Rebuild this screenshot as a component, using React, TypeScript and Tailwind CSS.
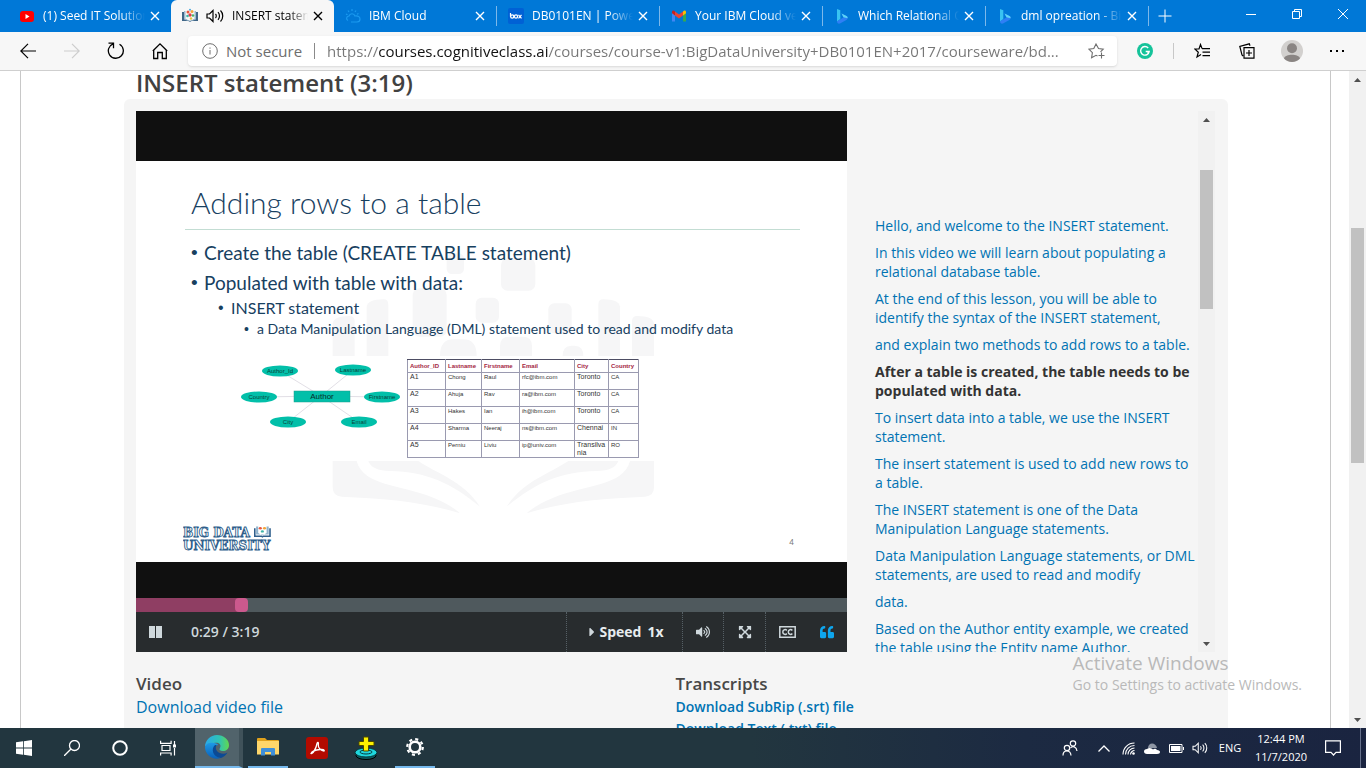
import type { ReactNode } from 'react';
import { FaCaretRight, FaQuoteLeft, FaVolumeUp, FaExpandArrowsAlt } from 'react-icons/fa';

type IconProps = { className?: string };

const line = { fill: 'none', stroke: 'currentColor' } as const;

function CloseIcon({ className = 'size-4' }: IconProps) {
  return (
    <svg viewBox="0 0 16 16" className={className} {...line} strokeWidth="1.4">
      <path d="M4 4l8 8M12 4l-8 8" />
    </svg>
  );
}

function YoutubeIcon() {
  return (
    <svg viewBox="0 0 16 16" className="size-4 shrink-0">
      <rect x="1" y="3" width="14" height="11" rx="3" fill="#f00" />
      <path d="M6.5 6l4 2.5-4 2.5z" fill="#fff" />
    </svg>
  );
}

function BookIcon({ className = 'size-4 shrink-0' }: IconProps) {
  return (
    <svg viewBox="0 0 16 16" className={className}>
      <path d="M0 4h3v7l5 2 5-2V4h3v9H9.500l-1.500 1-1.500-1H0z" fill="#3f6687" />
      <path d="M2 3h1.500v8L8 13l4.500-2V3H14v8.500l-6 2-6-2z" fill="#9db9cf" />
      <circle cx="6" cy="4" r="1.500" fill="#e8573f" />
      <circle cx="10" cy="3.500" r="1.500" fill="#f3a53a" />
      <circle cx="8" cy="7" r="1.700" fill="#e23b4c" />
      <circle cx="5.500" cy="8" r="1.300" fill="#3fb6a8" />
      <circle cx="11" cy="7.500" r="1.300" fill="#46b36b" />
      <circle cx="8" cy="1.800" r="1" fill="#49a9dd" />
      <circle cx="9" cy="10.500" r="1.200" fill="#e7c23d" />
    </svg>
  );
}

function CloudIcon() {
  return (
    <svg viewBox="0 0 16 16" className="size-4 shrink-0" fill="none" stroke="#1b9af0" strokeWidth="1.2">
      <path d="M3 12.500c-2-1-2-4 1-4.500 1-3 5-3 6 0 3-.5 5 1 5 3s-1.500 3-3 3H6" />
      <path d="M1 6l1.500.8M3 2.500l1 1.500M7 1v2M11 2.500l-1 1.500M13.500 5.500l-1.500.7" />
    </svg>
  );
}

function BoxIcon() {
  return (
    <svg viewBox="0 0 16 16" className="size-4 shrink-0">
      <rect width="16" height="16" rx="2" fill="#0061d5" />
      <g fill="none" stroke="#fff" strokeWidth="1.200">
        <path d="M2.500 5v3.600" />
        <circle cx="4.200" cy="8.500" r="1.600" />
        <circle cx="8" cy="8.500" r="1.600" />
        <path d="M10.500 6.800l3 3.500M13.500 6.800l-3 3.500" />
      </g>
    </svg>
  );
}

function GmailIcon() {
  return (
    <svg viewBox="0 0 16 16" className="size-4 shrink-0">
      <path d="M1 4v9.500h3V7z" fill="#4285f4" />
      <path d="M15 4v9.500h-3V7z" fill="#34a853" />
      <path d="M12 3.500V7.500l3-2.200V4c0-1.600-1.800-2.200-3-.5z" fill="#fbbc04" />
      <path d="M4 3.500l4 3 4-3v4l-4 3-4-3z" fill="#ea4335" />
      <path d="M4 3.500v4L1 5.300V4c0-1.600 1.800-2.200 3-.5z" fill="#c5221f" />
    </svg>
  );
}

function BingIcon() {
  return (
    <svg viewBox="0 0 16 16" className="size-4 shrink-0">
      <path d="M3 1l3.300 1.300V11L3 13.500z" fill="#39c3f2" />
      <path d="M7.500 5.500l5 2.500c1.800 1 1.500 3-.2 4L6 15.500c-2 .6-3-1-3-2.300L9.500 9.500z" fill="#2f7ff5" />
      <path d="M7.500 5.500l5 2.500c1 .6 1.200 1.400 1 2.200L9.500 9.300z" fill="#5cd5f5" />
    </svg>
  );
}

function SpeakerOutline({ className = 'size-4' }: IconProps) {
  return (
    <svg viewBox="0 0 18 16" className={className} {...line} strokeWidth="1.200">
      <path d="M1 6h2.500L7 2.500v11L3.500 10H1z" />
      <path d="M9.500 6c1 1 1 3 0 4M12 4.200c2 2 2 5.600 0 7.600M14.500 2.500c3 3 3 8 0 11" />
    </svg>
  );
}

const tabs: { title: string; icon: ReactNode; active?: boolean }[] = [
  { title: '(1) Seed IT Solutions', icon: <YoutubeIcon /> },
  { title: 'INSERT statement', icon: <BookIcon />, active: true },
  { title: 'IBM Cloud', icon: <CloudIcon /> },
  { title: 'DB0101EN | PowerPoint', icon: <BoxIcon /> },
  { title: 'Your IBM Cloud verify', icon: <GmailIcon /> },
  { title: 'Which Relational Query', icon: <BingIcon /> },
  { title: 'dml opreation - Bing', icon: <BingIcon /> },
];

function TabStrip() {
  return (
    <header className="flex h-8 shrink-0 bg-[#0078d7] pl-2 text-white">
      <div role="tablist" aria-label="Tabs" className="flex min-w-0">
        {tabs.map((tab, i) => (
          <div
            key={tab.title}
            className={
              'flex w-[163px] min-w-0 items-center pr-2 pl-[11px] ' +
              (tab.active ? 'rounded-t-md bg-[#f7f7f7] text-black' : '')
            }
          >
            <button role="tab" aria-selected={!!tab.active} className="flex min-w-0 flex-1 items-center gap-2">
              {tab.icon}
              {tab.active && <SpeakerOutline className="h-4 w-[18px] shrink-0" />}
              <span className="min-w-0 flex-1 overflow-hidden text-left text-xs whitespace-nowrap [mask-image:linear-gradient(90deg,#000_75%,transparent)]">
                {tab.title}
              </span>
            </button>
            <button aria-label={'Close ' + tab.title} className="ml-0.5">
              <CloseIcon />
            </button>
            {i > 1 && <span className="-mr-2 ml-2 h-5 w-px shrink-0 bg-[#7db8ea]" />}
          </div>
        ))}
      </div>
      <button aria-label="New tab" className="flex w-8 items-center justify-center">
        <svg viewBox="0 0 14 14" className="size-3.5" {...line}>
          <path d="M7 .5v13M.5 7h13" />
        </svg>
      </button>
      <div className="ml-auto flex h-7">
        <button aria-label="Minimize" className="flex w-[46px] items-center justify-center">
          <svg viewBox="0 0 10 10" className="size-2.5" {...line}>
            <path d="M0 5.500h10" />
          </svg>
        </button>
        <button aria-label="Restore" className="flex w-[46px] items-center justify-center">
          <svg viewBox="0 0 10 10" className="size-2.5" {...line}>
            <path d="M.5 2.500h7v7h-7zM2.500 2.500v-2h7v7h-2" />
          </svg>
        </button>
        <button aria-label="Close window" className="flex w-[46px] items-center justify-center">
          <svg viewBox="0 0 10 10" className="size-2.5" {...line}>
            <path d="M0 0l10 10M10 0L0 10" />
          </svg>
        </button>
      </div>
    </header>
  );
}

function ToolButton({ label, children, className = '' }: { label: string; children: ReactNode; className?: string }) {
  return (
    <button aria-label={label} className={'flex h-8 w-11 shrink-0 items-center justify-center ' + className}>
      {children}
    </button>
  );
}

function Toolbar() {
  return (
    <nav className="flex h-[39px] shrink-0 items-center border-b border-[#cfcfcf] bg-[#f7f7f7] pr-[7px] pl-1.5 text-black">
      <ToolButton label="Back">
        <svg viewBox="0 0 16 16" className="size-4" {...line} strokeWidth="1.200">
          <path d="M16 8H.8M8 .8L.8 8 8 15.200" />
        </svg>
      </ToolButton>
      <ToolButton label="Forward" className="text-[#cdcdcd]">
        <svg viewBox="0 0 16 16" className="size-4" {...line} strokeWidth="1.200">
          <path d="M0 8h15.200M8 .8L15.200 8 8 15.200" />
        </svg>
      </ToolButton>
      <ToolButton label="Refresh">
        <svg viewBox="0 0 18 18" className="size-[18px]" {...line} strokeWidth="1.300">
          <path d="M6 1.800A7.500 7.500 0 1 0 12.500 2.200M1.500 1.200h5v5" />
        </svg>
      </ToolButton>
      <ToolButton label="Home">
        <svg viewBox="0 0 16 18" className="h-[18px] w-4" {...line} strokeWidth="1.300">
          <path d="M1.700 16.500V8L8 1.800 14.300 8v8.500h-4V10.500H5.700v6zM.8 9L8 1.800 15.200 9" />
        </svg>
      </ToolButton>
      <div className="ml-1.5 flex h-[30px] min-w-0 flex-1 items-center rounded-sm bg-white pr-3 pl-3.5 text-[15px] text-[#6e6e6e] shadow-sm">
        <svg viewBox="0 0 16 16" className="size-4 shrink-0" {...line}>
          <circle cx="8" cy="8" r="7.300" />
          <path d="M8 7v4.500M8 4.500v1.200" />
        </svg>
        <label htmlFor="address" className="ml-2 shrink-0">
          Not secure
        </label>
        <span className="mx-3 h-4 w-px shrink-0 bg-[#8a8a8a]" />
        <input
          id="address"
          readOnly
          className="min-w-0 flex-1 bg-[linear-gradient(90deg,#767676_52px,#111111_52px,#111111_221px,#767676_221px)] bg-clip-text text-[15px] text-transparent outline-none"
          value="https://courses.cognitiveclass.ai/courses/course-v1:BigDataUniversity+DB0101EN+2017/courseware/bd..."
        />
        <button aria-label="Add to favorites" className="ml-2 shrink-0">
          <svg viewBox="0 0 17 16" className="h-4 w-[17px]" {...line} strokeWidth="1.100">
            <path d="M12.500 8.800l2.700-2.600-4.700-.7L8 1 5.800 5.500l-4.900.7 3.500 3.500-.8 5L8 12.300l1.500.8M13.500 9.500v6M10.500 12.500h6" />
          </svg>
        </button>
      </div>
      <ToolButton label="Grammarly" className="ml-1.5">
        <svg viewBox="0 0 16 16" className="size-4">
          <circle cx="8" cy="8" r="8" fill="#15c39a" />
          <path d="M11.200 5A4.300 4.300 0 1 0 12.200 8.500H8.700M12.200 8.500l-1.500 2" fill="none" stroke="#fff" strokeWidth="1.400" />
        </svg>
      </ToolButton>
      <span className="mx-1.5 h-4 w-px shrink-0 bg-[#c8c8c8]" />
      <div className="flex gap-px">
        <ToolButton label="Favorites">
          <svg viewBox="0 0 16 16" className="size-4" {...line} strokeWidth="1.200">
            <path d="M8 5.500L6.500 1.500 5 6H.8l3.500 3.200L3 14l4-2.500M8 5.700h8M8.500 9.200H16M8.500 12.700H16" />
          </svg>
        </ToolButton>
        <ToolButton label="Collections">
          <svg viewBox="0 0 16 16" className="size-4" {...line} strokeWidth="1.200">
            <path d="M5 4.700h10v10.500H5zM10 7v6M7 10h6M4 13L3 12 .8 3.500l9.500-2.700.7 2" />
          </svg>
        </ToolButton>
        <ToolButton label="Profile">
          <svg viewBox="0 0 22 22" className="size-[22px]">
            <circle cx="11" cy="11" r="11" fill="#d2d0ce" />
            <circle cx="11" cy="8.300" r="5" fill="#8a8583" />
            <path d="M3 18.500c1-5 15-5 16 0a11 11 0 0 1-16 0z" fill="#8a8583" />
          </svg>
        </ToolButton>
        <ToolButton label="Settings and more">
          <svg viewBox="0 0 16 4" className="h-1 w-4" fill="currentColor">
            <rect x="1" y="1" width="2" height="2" />
            <rect x="7" y="1" width="2" height="2" />
            <rect x="13" y="1" width="2" height="2" />
          </svg>
        </ToolButton>
      </div>
    </nav>
  );
}

function Arrow({ up }: { up?: boolean }) {
  return (
    <svg viewBox="0 0 17 17" className="size-[17px] shrink-0">
      <path d={up ? 'M5 11l3.500-4L12 11z' : 'M5 7l3.500 4L12 7z'} fill="#505050" />
    </svg>
  );
}

function ScrollBar({ thumb }: { thumb: string }) {
  return (
    <div aria-hidden="true" className="flex w-[17px] shrink-0 flex-col bg-[#f1f1f1]">
      <Arrow up />
      <div className="min-h-0 flex-1">
        <div className={'mx-0.5 bg-[#c1c1c1] ' + thumb} />
      </div>
      <Arrow />
    </div>
  );
}

function Watermark() {
  const half = (
    <>
      <path d="M98 348V250q5-22 50-22 16 0 16 16v104z" />
      <path d="M200 348V200q5-22 50-22 15 0 15 16v154z" />
      <path d="M98 663h72c20 75 130 70 230 110q50 20 80 47c-110-35-230-45-355-50q-27-2-27-28z" />
      <path d="M205 663h150c60 40 135 60 185 137-85-70-160-105-270-107q-55-1-65-30z" />
    </>
  );
  return (
    <svg viewBox="0 0 1260 870" aria-hidden="true" className="absolute top-[79px] left-[164px] w-[420px]" fill="#f6f6f7">
      {half}
      <g transform="translate(1160 0) scale(-1 1)">{half}</g>
      <rect x="338" y="145" width="102" height="145" rx="20" />
      <rect x="440" y="40" width="52" height="62" rx="16" />
      <rect x="603" y="55" width="103" height="97" rx="20" />
      <rect x="527" y="173" width="70" height="75" rx="18" />
      <rect x="745" y="190" width="70" height="90" rx="18" />
      <path d="M420 348q0-50 40-50h30q40 0 40 50zM600 348v-30q0-28 28-28h40q28 0 28 28v30zM788 348q0-31 26-31h10q26 0 26 31z" />
    </svg>
  );
}

const entities = [
  { name: 'Author_Id', x: 39, y: 12 },
  { name: 'Lastname', x: 112, y: 11 },
  { name: 'Country', x: 18, y: 38 },
  { name: 'Firstname', x: 141, y: 38 },
  { name: 'City', x: 47, y: 63 },
  { name: 'Email', x: 118, y: 63 },
];

function EntityDiagram() {
  return (
    <svg viewBox="0 0 160 72" className="h-[72px] w-40 shrink-0 font-['Liberation_Sans']" textAnchor="middle">
      {entities.map((e) => (
        <g key={e.name}>
          <line x1="80" y1="37" x2={e.x} y2={e.y} stroke="#e2dfe6" />
          <ellipse cx={e.x} cy={e.y} rx="18" ry="5.500" fill="#02bfa9" />
          <text x={e.x} y={e.y + 2} fontSize="6" fill="#0a3f3a">
            {e.name}
          </text>
        </g>
      ))}
      <rect x="53" y="32" width="56" height="11" fill="#02bfa9" stroke="#1c9c8c" strokeWidth=".5" />
      <text x="81" y="40" fontSize="8" fill="#062b28">
        Author
      </text>
    </svg>
  );
}

const columns = [
  { name: 'Author_ID', width: 'w-[38px]', size: 'text-[7px]' },
  { name: 'Lastname', width: 'w-9', size: 'text-[6px]' },
  { name: 'Firstname', width: 'w-[38px]', size: 'text-[6px]' },
  { name: 'Email', width: 'w-[55px]', size: 'text-[6px]' },
  { name: 'City', width: 'w-[34px]', size: 'text-[7px]' },
  { name: 'Country', width: 'w-[30px]', size: 'text-[6px]' },
];

const authors = [
  ['A1', 'Chong', 'Raul', 'rfc@ibm.com', 'Toronto', 'CA'],
  ['A2', 'Ahuja', 'Rav', 'ra@ibm.com', 'Toronto', 'CA'],
  ['A3', 'Hakes', 'Ian', 'ih@ibm.com', 'Toronto', 'CA'],
  ['A4', 'Sharma', 'Neeraj', 'ns@ibm.com', 'Chennai', 'IN'],
  ['A5', 'Perniu', 'Liviu', 'ip@univ.com', 'Transilvania', 'RO'],
];

function AuthorTable() {
  return (
    <table className="w-[231px] table-fixed border-collapse border border-[#4d4d63] bg-white font-['Liberation_Sans'] text-[6px] leading-[8px] text-[#333]">
      <thead>
        <tr className="h-[13px]">
          {columns.map((c) => (
            <th key={c.name} className={'border border-[#9a9ab0] border-t-[#4d4d63] px-0.5 text-left font-bold text-[#a3253f] ' + c.width}>
              {c.name}
            </th>
          ))}
        </tr>
      </thead>
      <tbody>
        {authors.map((row) => (
          <tr key={row[0]} className="h-[17px] align-top">
            {row.map((cell, i) => (
              <td key={i} className={'border border-[#9a9ab0] px-0.5 break-all ' + columns[i].size}>
                {cell}
              </td>
            ))}
          </tr>
        ))}
      </tbody>
    </table>
  );
}

const bullets = [
  { text: 'Create the table (CREATE TABLE statement)', style: 'text-[19px] leading-[30px]' },
  { text: 'Populated with table with data:', style: 'text-[19px] leading-[30px]' },
  { text: 'INSERT statement', style: 'pl-[27px] text-base leading-5' },
  {
    text: 'a Data Manipulation Language (DML) statement used to read and modify data',
    style: 'pl-[53px] text-sm leading-[22px]',
  },
];

function Slide() {
  return (
    <div className="relative h-[401px] bg-white px-[47px] pt-5 font-['Lato'] text-[#17405f] [font-variant-ligatures:none]">
      <Watermark />
      <div className="relative">
        <h3 className="ml-0.5 border-b border-[#c3ddd3] pb-1.5 pl-1.5 text-[30px] leading-[42px] font-light">
          Adding rows to a table
        </h3>
        <ul className="pt-2 pl-2">
          {bullets.map((b) => (
            <li key={b.text} className={'flex ' + b.style}>
              <span className="w-[13px] shrink-0 font-['Liberation_Sans']">•</span>
              {b.text}
            </li>
          ))}
        </ul>
        <div className="mt-[19px] ml-[58px] flex gap-1.5">
          <EntityDiagram />
          <AuthorTable />
        </div>
      </div>
      <div className="absolute inset-x-[47px] bottom-2.5 flex items-end justify-between">
        <svg viewBox="0 0 90 27" className="h-[27px] w-[90px] font-['DejaVu_Serif'] font-bold" fill="#fff" stroke="#2f5f8c" strokeWidth=".9">
          <text x="0" y="12" fontSize="12">
            BIG DATA
          </text>
          <text x="0" y="25" fontSize="12">
            UNIVERSITY
          </text>
          <g transform="translate(71 0) scale(1.050 .8)" stroke="none">
            <path d="M0 4h1.500v9h6L8 14l.5-1h6V4H16v11H9l-1 1-1-1H0z" fill="#2f5f8c" />
            <path d="M2 2h2v8l4 3 4-3V2h2v10H2z" fill="#8eb2cc" />
            <circle cx="6" cy="4" r="1.500" fill="#e8573f" />
            <circle cx="10" cy="4" r="1.500" fill="#f3a53a" />
            <circle cx="8" cy="8" r="1.500" fill="#3fb6a8" />
          </g>
        </svg>
        <span className="mr-1.5 mb-1 text-[8px] leading-3 text-[#777]">4</span>
      </div>
    </div>
  );
}

function Player() {
  const control = 'flex h-10 items-center justify-center border-l border-dotted border-[#566066]';
  return (
    <section aria-label="Video" className="min-w-0 flex-1 bg-[#101010]">
      <div className="pt-[50px] pb-9">
        <Slide />
      </div>
      <div role="progressbar" aria-label="Position" aria-valuenow={29} aria-valuemax={199} className="flex h-3.5 bg-[#4f595d]">
        <div className="w-[15%] bg-[#8f3e63]" />
        <div className="-ml-2 w-[13px] rounded-sm bg-[#cb598d]" />
      </div>
      <div className="flex h-10 items-center bg-[#282c2e] text-[#cfd8dc]">
        <button aria-label="Pause" className="ml-[13px] flex gap-px">
          <span className="h-3 w-1.5 bg-current" />
          <span className="h-3 w-1.5 bg-current" />
        </button>
        <span className="ml-[29px] text-sm leading-none font-semibold">0:29 / 3:19</span>
        <button className={control + ' ml-auto w-[116px] text-sm font-bold text-[#e7ecee]'}>
          <FaCaretRight className="size-3.5 text-[#cfd8dc]" />
          Speed<span className="ml-1.5">1x</span>
        </button>
        <button aria-label="Volume" className={control + ' w-[41px]'}>
          <FaVolumeUp className="size-3.5" />
        </button>
        <button aria-label="Fill browser" className={control + ' w-[42px]'}>
          <FaExpandArrowsAlt className="size-3.5" />
        </button>
        <button aria-label="Closed captions" className={control + ' w-11'}>
          <svg viewBox="0 0 17 12" className="h-3 w-[17px]" {...line} strokeWidth="1.500">
            <path d="M.8.8h15.400v10.400H.8zM7.800 4.500c-1-1.500-4-1.200-4 1.500s3 3 4 1.500M13.300 4.500c-1-1.500-4-1.200-4 1.500s3 3 4 1.500" />
          </svg>
        </button>
        <button aria-label="Transcript" className="flex h-10 w-[38px] items-center pl-[11px] text-[#0ea6ee]">
          <FaQuoteLeft className="size-3.5" />
        </button>
      </div>
    </section>
  );
}

const transcript = [
  'Hello, and welcome to the INSERT statement.',
  'In this video we will learn about populating a relational database table.',
  'At the end of this lesson, you will be able to identify the syntax of the INSERT statement,',
  'and explain two methods to add rows to a table.',
  'After a table is created, the table needs to be populated with data.',
  'To insert data into a table, we use the INSERT statement.',
  'The insert statement is used to add new rows to a table.',
  'The INSERT statement is one of the Data Manipulation Language statements.',
  'Data Manipulation Language statements, or DML statements, are used to read and modify',
  'data.',
  'Based on the Author entity example, we created the table using the Entity name Author.',
];

function Transcript() {
  return (
    <aside className="flex h-[541px] w-[368px] shrink-0 overflow-hidden pl-7">
      <ol className="flex min-w-0 flex-1 flex-col gap-2 pt-[105px] text-sm leading-[19px] text-[#0073b3]">
        {transcript.map((text, i) => (
          <li key={i} className={i === 4 ? 'font-bold text-[#333]' : ''}>
            {text}
          </li>
        ))}
      </ol>
      <ScrollBar thumb="mt-[42px] h-[139px]" />
    </aside>
  );
}

function CoursePage() {
  return (
    <div className="flex min-h-0 flex-1 overflow-hidden bg-white">
      <main className="mr-[18px] ml-5 min-w-0 flex-1 border-x border-[#c8c8c8] pr-[102px] pl-[103px]">
        <h1 className="-mt-1 ml-3 text-2xl leading-8 font-semibold text-[#414141]">INSERT statement (3:19)</h1>
        <article className="rounded-md bg-[#f5f5f5] py-3 pr-[13px] pl-3">
          <div className="flex">
            <Player />
            <Transcript />
          </div>
          <div className="mt-[21px] grid grid-cols-2 text-[#0073b3]">
            <section>
              <h2 className="text-[17px] leading-[22px] font-semibold text-[#474747]">Video</h2>
              <a href="#video" className="leading-[22px]">
                Download video file
              </a>
            </section>
            <section className="flex flex-col items-start">
              <h2 className="text-[17px] leading-[22px] font-semibold text-[#474747]">Transcripts</h2>
              <a href="#srt" className="text-sm leading-6 font-semibold">
                Download SubRip (.srt) file
              </a>
              <a href="#txt" className="text-sm leading-5 font-semibold">
                Download Text (.txt) file
              </a>
            </section>
          </div>
        </article>
      </main>
      <ScrollBar thumb="mt-[140px] h-[235px]" />
    </div>
  );
}

function TaskButton({ label, children, className = 'w-12' }: { label: string; children: ReactNode; className?: string }) {
  return (
    <button aria-label={label} className={'flex h-10 items-center justify-center ' + className}>
      {children}
    </button>
  );
}

function Taskbar() {
  return (
    <footer className="flex h-10 shrink-0 items-center bg-[linear-gradient(90deg,#22363f_0%,#22363f_55%,#1c2a42_75%,#1a2440_100%)] text-white">
      <TaskButton label="Start">
        <svg viewBox="0 0 16 16" className="size-4" fill="currentColor">
          <path d="M0 2.300L7 1.300v6.300H0zM7.800 1.200L16 0v7.600H7.800zM0 8.400h7v6.300l-7-1zM7.800 8.400H16V16l-8.200-1.200z" />
        </svg>
      </TaskButton>
      <TaskButton label="Search">
        <svg viewBox="0 0 16 16" className="size-4" {...line} strokeWidth="1.300">
          <circle cx="10.500" cy="5.500" r="5" />
          <path d="M7 9L0 16" />
        </svg>
      </TaskButton>
      <TaskButton label="Cortana">
        <svg viewBox="0 0 16 16" className="size-4" {...line} strokeWidth="2">
          <circle cx="8" cy="8" r="6.800" />
        </svg>
      </TaskButton>
      <TaskButton label="Task view">
        <svg viewBox="0 0 16 16" className="size-4" {...line} strokeWidth="1.200">
          <path d="M.6.800v2.500h10.500V.8M2 5.500h8v5H2zM.6 15.500V13h10.500v2.500M14.500 1v4M14.500 8v7.500" />
          <path d="M13 4.500h3v3h-3z" fill="currentColor" stroke="none" />
        </svg>
      </TaskButton>
      <TaskButton label="Microsoft Edge" className="ml-[3px] w-12 border-r-4 border-b-2 border-r-[#40525a] border-b-[#76b9ed] bg-[#51636b]">
        <svg viewBox="0 0 24 24" className="size-6">
          <defs>
            <linearGradient id="edgeTop" x1="0" x2="1">
              <stop offset="0" stopColor="#2aa9ea" />
              <stop offset=".6" stopColor="#2fc3b4" />
              <stop offset="1" stopColor="#62d84e" />
            </linearGradient>
            <linearGradient id="edgeSide" x1="0" x2="0" y1="0" y2="1">
              <stop offset="0" stopColor="#1e9be6" />
              <stop offset="1" stopColor="#0a5fb8" />
            </linearGradient>
          </defs>
          <path d="M0 12C0 5 5.500 0 12 0s12 4.500 12 10c0 4-3 6-6 6-2.500 0-4.500-1-3-3 2-4-2-6-6-5-5 0-8 2-9 4z" fill="url(#edgeTop)" />
          <path d="M0 12c1-4 5-5 9-4 2 0 4 1 4 2-6 1-5 11 3 13-8 3-16-3-16-11z" fill="url(#edgeSide)" />
          <path d="M10 10c-4 3-3 12 6 13 3-1 5-3 6.500-5.500-3 2-8 1.500-10.500-1.500-1.500-2-1.500-4-.5-6z" fill="#0c4a94" />
        </svg>
      </TaskButton>
      <TaskButton label="File Explorer" className="ml-[5px] w-10 border-b-2 border-[#76b9ed]">
        <svg viewBox="0 0 22 18" className="h-[18px] w-[22px]">
          <path d="M0 1q0-1 1-1h7l2 2h11q1 0 1 1v5H0z" fill="#e0a21c" />
          <path d="M0 3h22v13.500H0z" fill="#fed66a" />
          <path d="M4 17.500V11q0-1 1-1h12q1 0 1 1v6.500h-4V14H8v3.500z" fill="#3f8fd8" />
        </svg>
      </TaskButton>
      <TaskButton label="Acrobat Reader" className="ml-1 w-[49px]">
        <svg viewBox="0 0 22 22" className="size-[22px]">
          <rect width="22" height="22" rx="3" fill="#b30b00" />
          <path d="M5 16.500c1.500 1 5-5 5.800-9 .4-3 2-2.500 1.500 0-.5 3.500 3 6.500 5.700 6.500 1-1-1.500-2-4-1.500-3 .3-8 1.700-9 4z" fill="none" stroke="#fff" strokeWidth="1.300" />
        </svg>
      </TaskButton>
      <TaskButton label="Download manager" className="w-[49px]">
        <svg viewBox="0 0 24 24" className="size-6">
          <ellipse cx="12" cy="19.500" rx="10" ry="4" fill="#0b5a5f" stroke="#000" />
          <ellipse cx="12" cy="16.500" rx="11" ry="4.500" fill="#1fd7dd" stroke="#06383c" />
          <ellipse cx="12" cy="16" rx="6" ry="2" fill="none" stroke="#06383c" />
          <path d="M9.500 1h5v4.500H20v4h-5.500V15h-5V9.500H5v-4h4.500z" fill="#fff200" stroke="#4c4a00" />
        </svg>
      </TaskButton>
      <TaskButton label="Settings" className="ml-[5px] w-10 border-b-2 border-[#76b9ed]">
        <svg viewBox="0 0 18 18" className="size-[18px]" {...line}>
          <circle cx="9" cy="9" r="5.300" strokeWidth="2.600" />
          <circle cx="9" cy="9" r="7.800" strokeWidth="2.200" strokeDasharray="3.060 3.060" />
        </svg>
      </TaskButton>

      <div className="ml-auto flex items-center">
        <TaskButton label="People" className="mr-1 w-9">
          <svg viewBox="0 0 16 16" className="size-4" {...line} strokeWidth="1.200">
            <circle cx="5" cy="8" r="2.700" />
            <circle cx="11" cy="3.500" r="2.700" />
            <path d="M1 15.500c0-6 7.500-6 8 0M8.500 8c2-2.500 6-1.500 6.500 3" />
          </svg>
        </TaskButton>
        <TaskButton label="Show hidden icons" className="w-6">
          <svg viewBox="0 0 12 7" className="h-[7px] w-3" {...line} strokeWidth="1.300">
            <path d="M.5 6.500L6 1l5.500 5.500" />
          </svg>
        </TaskButton>
        <TaskButton label="Network" className="w-6">
          <svg viewBox="0 0 13 13" className="size-[13px]" {...line} strokeWidth="1.100">
            <path d="M1 12.500C1 6 6 1 12.500 1M3.500 12.500c0-5 4-9 9-9M6 12.500c0-3.500 3-6.500 6.500-6.500M8.500 12.500c0-2 2-4 4-4" />
            <circle cx="11.500" cy="11.500" r="1.300" fill="currentColor" stroke="none" />
          </svg>
        </TaskButton>
        <TaskButton label="OneDrive" className="w-6">
          <svg viewBox="0 0 16 11" className="h-[11px] w-4">
            <path d="M4 5c0-6 8-6 9 0z" fill="#8f97a5" />
            <path d="M3 11c-4 0-4-5 0-5 2-2 5-1 6 .5 1-1 3-1 4 .5 4 0 4 4 0 4z" fill="#fff" />
          </svg>
        </TaskButton>
        <TaskButton label="Battery" className="w-6">
          <svg viewBox="0 0 15 9" className="h-[9px] w-[15px]" {...line}>
            <path d="M.5.500h12.500v8H.5zM14.500 3v3" />
            <path d="M2 2h9.500v5H2z" fill="currentColor" stroke="none" />
          </svg>
        </TaskButton>
        <TaskButton label="Volume" className="w-6">
          <SpeakerOutline className="h-3.5 w-4" />
        </TaskButton>
        <button className="w-9 text-center text-[11px]">ENG</button>
        <button className="w-[66px] text-center text-[11px] leading-[18px]">
          12:44 PM
          <br />
          11/7/2020
        </button>
        <TaskButton label="Notifications" className="w-[38px]">
          <svg viewBox="0 0 16 16" className="size-4" {...line} strokeWidth="1.200">
            <path d="M.6.800h14.800v11.500H11L8.500 15 6 12.300H.6z" />
          </svg>
        </TaskButton>
        <span className="mr-[5px] ml-2 h-10 w-px bg-[#66708a]" />
      </div>
    </footer>
  );
}

export default function App() {
  return (
    <div className="relative flex h-screen flex-col overflow-hidden font-['Open_Sans',sans-serif]">
      <TabStrip />
      <Toolbar />
      <CoursePage />
      <Taskbar />
      <div className="pointer-events-none absolute right-16 bottom-[73px] text-[#b9b9b9]">
        <p className="text-[19px] leading-6">Activate Windows</p>
        <p className="text-sm leading-5">Go to Settings to activate Windows.</p>
      </div>
    </div>
  );
}
